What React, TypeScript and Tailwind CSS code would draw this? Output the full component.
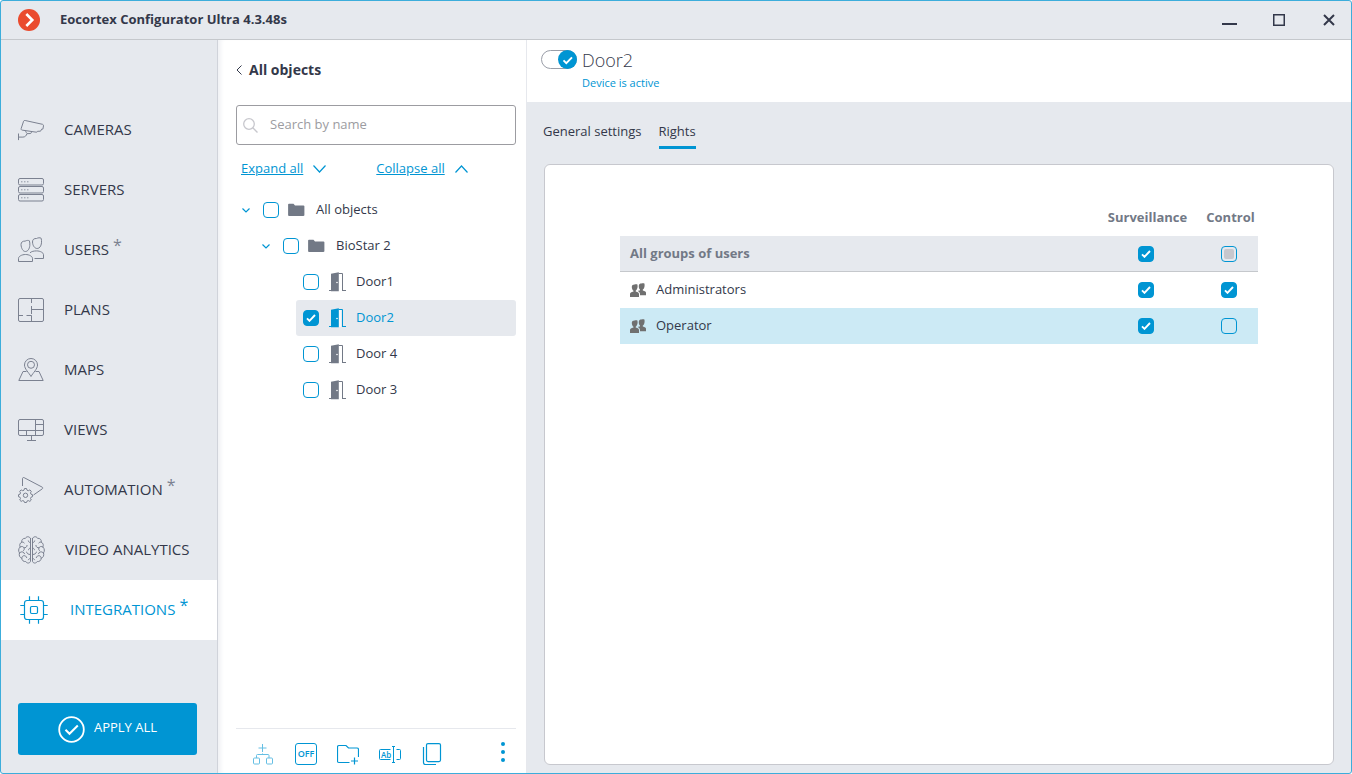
import React, { useState } from 'react';
import clsx from 'clsx';

type IconProps = { className?: string };

const CameraIcon = ({ className }: IconProps) => (
  <svg className={className} width="26" height="26" viewBox="0 0 26 26" fill="none" stroke="currentColor" strokeLinejoin="round">
    <path d="M5.6 4.200 3.200 11.400c-.3.900 0 1.500.9 1.700l14.200 2.100c.7.1 1-.2 1.200-.9l3-.1 1.200-2.100h1.200l.6-3.300c.1-.8-.3-1.200-1-1.500L7.200 3.500c-.8-.2-1.300 0-1.600.7Z" />
    <path d="M6.300 13.400c1.600.4 1.400 1.600 2.600 2.900M14 14.800c-.9.200-1 1.100-1.300 1.700l-3.800.2c-.5 2-1.900 3.400-4 3.400H.6M.5 16.500v6.600" />
  </svg>
);

const ServersIcon = ({ className }: IconProps) => (
  <svg className={className} width="26" height="24" viewBox="0 0 26 24" fill="none" stroke="currentColor">
    {[0, 8, 16].map((y) => (
      <g key={y}>
        <rect x=".5" y={y + 0.5} width="25" height="6.5" rx="1.5" />
        <path d={`M3.2 ${y + 3.8}h1.2M6.2 ${y + 3.8}h1.2M9.2 ${y + 3.8}h1.2`} />
      </g>
    ))}
  </svg>
);

const UsersIcon = ({ className }: IconProps) => (
  <svg className={className} width="26" height="26" viewBox="0 0 26 26" fill="none" stroke="currentColor" strokeLinejoin="round">
    <path d="M3 7.600C3 5 4.800 4 7.200 4.100c1.400-.8 3.200-.9 4.200-.3.400 1.500.6 3 .4 4.700-.3 3.300-2 6-4.400 6S3.300 11.500 3 7.600Z" />
    <path d="M.5 24.500v-3.200c0-1.800 3.200-3.800 7-3.800s7 2 7 3.800v3.200Z" />
    <path d="M14.500 5c0-2.600 1.600-3.700 4-3.500 1.500-.8 3.600-1 4.600-.3.400 1.300.6 3 .4 4.600-.3 3.300-1.900 5.700-4.300 5.700s-4.500-2.600-4.700-6.500Z" />
    <path d="M12 15.800c1.500-1.400 3.900-1.900 6.500-1.900 3.800 0 7 1.800 7 3.800v3.800h-9" />
  </svg>
);

const PlansIcon = ({ className }: IconProps) => (
  <svg className={className} width="26" height="24" viewBox="0 0 26 24" fill="none" stroke="currentColor">
    <rect x=".5" y=".5" width="25" height="23" rx="1.5" />
    <path d="M13.500 .5v4.500M13.500 8v8M13.500 11.500h12M.5 17.500h4.500M8.500 17.500h5v6" />
  </svg>
);

const MapsIcon = ({ className }: IconProps) => (
  <svg className={className} width="26" height="24" viewBox="0 0 26 24" fill="none" stroke="currentColor" strokeLinejoin="round">
    <path d="M13 18.500C11 14.800 6.500 11 6.500 7a6.500 6.500 0 0 1 13 0c0 4-4.500 7.800-6.500 11.500Z" />
    <circle cx="13" cy="6.800" r="3.500" />
    <path d="M8.500 13.500H5L.8 22.500h24.400L21 13.500h-3.500" />
  </svg>
);

const ViewsIcon = ({ className }: IconProps) => (
  <svg className={className} width="26" height="22" viewBox="0 0 26 22" fill="none" stroke="currentColor">
    <rect x=".5" y=".5" width="25" height="16" rx="1.5" />
    <path d="M17.500 .5v16M17.500 5.500h8M.5 11.500h25M8.500 11.500v5M13.500 16.500v5M9 21.500h9" />
  </svg>
);

const AutomationIcon = ({ className }: IconProps) => (
  <svg className={className} width="26" height="26" viewBox="0 0 26 26" fill="none" stroke="currentColor" strokeLinejoin="round">
    <path d="M4.500 9V1.800c0-1.200.7-1.600 1.700-1.100l17.900 9.400c.9.5.9 1.200.1 1.800L15.500 18" />
    <circle cx="7.500" cy="18.300" r="2.200" />
    <path d="m6.500 11.500 2 0 .5 1.700 1.300.5 1.600-.8 1.400 1.400-.8 1.600.5 1.300 1.500.5v2l-1.500.5-.5 1.300.8 1.500-1.400 1.400-1.600-.8-1.300.5-.5 1.400h-2l-.5-1.400-1.300-.5-1.600.8-1.400-1.400.8-1.500-.5-1.300-1.500-.5v-2l1.500-.5.5-1.300-.8-1.600 1.400-1.400 1.600.8 1.300-.5Z" />
  </svg>
);

const BrainIcon = ({ className }: IconProps) => (
  <svg className={className} width="27" height="28" viewBox="0 0 27 28" fill="none" stroke="currentColor" strokeLinecap="round">
    {['', 'translate(27 0) scale(-1 1)'].map((transform) => (
      <g key={transform} transform={transform}>
        <path d="M12.500 2.500C11.800 .3 8.500 0 7.500 2.300 5 2 3.200 4 3.800 6.200 1.600 7 1.300 9.500 2.200 11 .3 12.500.2 15.500 1.600 17c-1 2.300.2 4.700 2.200 5.200 0 2.300 2 3.700 3.900 3.300 1.300 2.200 4.200 2 4.800-.2V2.500Z" />
        <path d="M12.300 6.500c-1.200 0-1.900-.6-2-1.600M3.800 6.200c1-.4 2 0 2.400.8M2.200 11c1.300-1 3.300-.6 3.900.9.500 1.200 0 2.400-.8 2.900M6.100 11.900c1.600 0 2.900-.9 3-2.500M12.300 12c-1 .2-1.700.9-1.800 1.800M1.600 17c.7-1 2-1.400 3.200-1 .9.300 1.500.9 1.700 1.700M12.300 18.500c-2.200 0-3.500-1-3.700-2.400M3.800 22.200c0-1.300.8-2.300 2-2.500 1.400-.2 2.600.6 2.900 1.900M12.300 22.500c-.9 0-1.600.5-1.900 1.300" />
      </g>
    ))}
  </svg>
);

const ChipIcon = ({ className }: IconProps) => (
  <svg className={className} width="28" height="28" viewBox="0 0 28 28" fill="none" stroke="currentColor" strokeWidth="1.2">
    <rect x="4.500" y="4.500" width="19" height="19" rx="2.5" />
    <rect x="10.500" y="10.500" width="7" height="7" rx="1.2" />
    <path d="M9.500 4.500V.3M18.500 4.500V.3M9.500 23.500v4.200M18.500 23.500v4.200M4.500 9.500H.3M4.500 18.500H.3M23.500 9.500h4.200M23.500 18.500h4.200" />
  </svg>
);

const FolderIcon = ({ className }: IconProps) => (
  <svg className={className} width="17" height="14" viewBox="0 0 17 14" fill="currentColor">
    <path d="M1 .8h4.500L7 2.500h8.500c.5 0 .9.300.9.800v8.800c0 .5-.4.9-.9.900H1c-.5 0-.9-.4-.9-.9V1.600C.1 1.100.5.8 1 .8Z" />
  </svg>
);

const DoorIcon = ({ className }: IconProps) => (
  <svg className={className} width="17" height="20" viewBox="0 0 17 20" fill="none">
    <path d="M2 1.800 9.800 .3v19H2Z" fill="currentColor" />
    <path d="M9.500 1.500h4v17M0 18.500h2.500M13 18.500h4" stroke="currentColor" />
    <path d="M11 2v17" stroke="white" strokeWidth="1.4" />
    <circle cx="8" cy="10.500" r=".8" fill="white" />
  </svg>
);

const GroupIcon = ({ className }: IconProps) => (
  <svg className={className} width="16" height="14" viewBox="0 0 16 14" fill="currentColor">
    <path d="M1.800 4C1.700 2.300 3 1.500 4.500 1.500c1.100-.5 2.500-.5 2.900 0 .4 2 .2 3.300-.4 4.500-.3.900-.8 1.400-1.300 1.700v.8C8 8.900 9 9.800 9 11v3H0v-3c0-1.200 1.200-2.100 3.500-2.500v-.8C2.500 7.200 1.900 5.800 1.800 4Z" />
    <path d="M8.800 2.800C8.900 1.200 10 .6 11.300.6c1-.6 2.600-.6 3.100 0 .4 1.800.2 3.200-.3 4.300-.3.800-.8 1.400-1.300 1.700v.8c2.200.4 3.200 1.300 3.200 2.300v2.500h-6V11c0-1.500-1-2.600-2.300-3.100 0 0 1-.4 2.300-.5v-.8C9.100 5.900 8.700 4.600 8.800 2.800Z" />
  </svg>
);

const Chevron = ({ className, up, width, height }: IconProps & { up?: boolean; width: number; height: number }) => (
  <svg className={className} width={width} height={height} viewBox={`0 0 ${width} ${height}`} fill="none" stroke="currentColor" strokeWidth="1.2">
    <path d={up ? `M.5 ${height - 0.5} ${width / 2} 1l${width / 2 - 0.5} ${height - 1.5}` : `M.5 .5 ${width / 2} ${height - 1}l${width / 2 - 0.5} ${1.5 - height}`} />
  </svg>
);

type CheckboxProps = {
  label: string;
  checked: boolean;
  partial?: boolean;
  onChange: () => void;
};

const Checkbox = ({ label, checked, partial, onChange }: CheckboxProps) => (
  <span className="inline-grid size-4 shrink-0 place-items-center align-top">
    <input
      type="checkbox"
      aria-label={label}
      checked={checked}
      onChange={onChange}
      className="col-start-1 row-start-1 size-4 appearance-none rounded-[4px] border border-[#0095d3] checked:bg-[#0095d3]"
    />
    {checked && (
      <svg className="pointer-events-none col-start-1 row-start-1" width="10" height="8" viewBox="0 0 10 8" fill="none" stroke="white" strokeWidth="1.9">
        <path d="m1 4.300 2.500 2.500L9 1" />
      </svg>
    )}
    {partial && !checked && <span className="pointer-events-none col-start-1 row-start-1 size-[10px] rounded-xs bg-[#c7c7cd]" />}
  </span>
);

const NAV = [
  { label: 'CAMERAS', Icon: CameraIcon, changed: false },
  { label: 'SERVERS', Icon: ServersIcon, changed: false },
  { label: 'USERS', Icon: UsersIcon, changed: true },
  { label: 'PLANS', Icon: PlansIcon, changed: false },
  { label: 'MAPS', Icon: MapsIcon, changed: false },
  { label: 'VIEWS', Icon: ViewsIcon, changed: false },
  { label: 'AUTOMATION', Icon: AutomationIcon, changed: true },
  { label: 'VIDEO ANALYTICS', Icon: BrainIcon, changed: false },
  { label: 'INTEGRATIONS', Icon: ChipIcon, changed: true },
];

const DOORS = ['Door1', 'Door2', 'Door 4', 'Door 3'];

const TitleBar = () => (
  <header className="flex h-[39px] shrink-0 items-center border-b border-[#c5c8cc] pr-[14px] pb-px pl-[17px]">
    <svg width="22" height="22" viewBox="0 0 22 22" fill="none">
      <circle cx="11" cy="11" r="11" fill="#ea4b2e" />
      <path d="m8.300 5 6 6-6 6" stroke="white" strokeWidth="2.6" />
    </svg>
    <h1 className="ml-5 pb-[2px] text-[13px] leading-5 font-bold">Eocortex Configurator Ultra 4.3.48s</h1>
    <div className="ml-auto flex gap-[34px]">
      <button type="button" aria-label="Minimize" className="flex size-4 items-center justify-center">
        <svg width="16" height="16" stroke="currentColor" strokeWidth="2"><path d="M1 12h15" /></svg>
      </button>
      <button type="button" aria-label="Maximize" className="flex size-4 items-center justify-center">
        <svg width="16" height="16" fill="none" stroke="currentColor" strokeWidth="1.5"><rect x="2.750" y="2.750" width="10.500" height="10.500" /></svg>
      </button>
      <button type="button" aria-label="Close" className="flex size-4 items-center justify-center">
        <svg width="16" height="16" stroke="currentColor" strokeWidth="2"><path d="m3 3 10 10M13 3 3 13" /></svg>
      </button>
    </div>
  </header>
);

const Sidebar = () => {
  const [active, setActive] = useState('INTEGRATIONS');

  return (
    <aside className="flex w-[217px] shrink-0 flex-col border-r border-[#d0d3da]">
      <nav className="mt-[60px]">
        {NAV.map(({ label, Icon, changed }) => {
          const isActive = label === active;
          return (
            <button
              key={label}
              type="button"
              onClick={() => setActive(label)}
              className={clsx(
                'flex h-[60px] w-full items-center text-[15px]',
                isActive ? 'gap-[22px] bg-white pl-[19px] text-[#0095d3]' : 'gap-5 pl-[17px]'
              )}
            >
              <Icon className={clsx('shrink-0', !isActive && 'text-[#7b8190]')} />
              <span className="flex gap-1 pb-[2px] leading-5 whitespace-nowrap">
                {label}
                {changed && <span className={clsx('text-base leading-3', !isActive && 'text-[#7b8190]')}>*</span>}
              </span>
            </button>
          );
        })}
      </nav>
      <button type="button" className="mt-auto mr-5 mb-[18px] ml-[17px] flex h-[52px] items-center justify-center gap-[9px] rounded-[3px] bg-[#0095d3] text-[13px] text-white">
        <svg width="27" height="27" viewBox="0 0 27 27" fill="none" stroke="white">
          <circle cx="13.500" cy="13.500" r="12.300" strokeWidth="1.8" />
          <path d="m7.500 13.800 4 4 8.300-8.300" strokeWidth="2" />
        </svg>
        <span className="pb-[2px]">APPLY ALL</span>
      </button>
    </aside>
  );
};

const ObjectsPanel = () => {
  const [checked, setChecked] = useState<string[]>(['Door2']);
  const [query, setQuery] = useState('');

  const toggle = (name: string) =>
    setChecked((prev) => (prev.includes(name) ? prev.filter((n) => n !== name) : [...prev, name]));

  return (
    <section className="flex w-[309px] shrink-0 flex-col border-r border-[#e6e8ed] bg-white pr-[10px] pl-[18px] shadow-[inset_5px_0_4px_-2px_#f1f2f5]">
      <button type="button" className="mt-5 flex h-5 items-center gap-[6px] text-sm font-bold">
        <svg width="7" height="10" viewBox="0 0 7 10" fill="none" stroke="currentColor"><path d="M5.500 .5 1 5l4.500 4.500" /></svg>
        All objects
      </button>

      <label className="mt-[25px] flex h-10 items-center gap-3 rounded-[3px] border border-[#9c9ca1] px-[6px]">
        <svg className="shrink-0 text-[#c7c7cd]" width="15" height="15" viewBox="0 0 15 15" fill="none" stroke="currentColor" strokeWidth="1.3">
          <circle cx="6" cy="6" r="5.300" />
          <path d="m9.800 9.800 4.700 4.700" />
        </svg>
        <input
          type="text"
          value={query}
          onChange={(e) => setQuery(e.target.value)}
          aria-label="Search by name"
          placeholder="Search by name"
          className="min-w-0 flex-1 text-[13px] outline-none placeholder:text-[#9c9ca1]"
        />
      </label>

      <div className="mt-[14px] flex h-5 items-center pl-[5px] text-[13px] text-[#0095d3]">
        <button type="button" className="flex items-center gap-[10px]">
          <span className="underline">Expand all</span>
          <Chevron width={13} height={8} />
        </button>
        <button type="button" className="ml-[50px] flex items-center gap-[10px]">
          <span className="underline">Collapse all</span>
          <Chevron width={13} height={8} up />
        </button>
      </div>

      <ul className="mt-[13px] text-[13px]">
        <li>
          <div className="flex h-9 items-center pl-[6px]">
            <Chevron className="mr-[13px] text-[#0095d3]" width={8} height={5} />
            <Checkbox label="All objects" checked={checked.includes('All objects')} onChange={() => toggle('All objects')} />
            <FolderIcon className="mr-[11px] ml-[9px] text-[#727986]" />
            All objects
          </div>
          <ul className="ml-5">
            <li>
              <div className="flex h-9 items-center pl-[6px]">
                <Chevron className="mr-[13px] text-[#0095d3]" width={8} height={5} />
                <Checkbox label="BioStar 2" checked={checked.includes('BioStar 2')} onChange={() => toggle('BioStar 2')} />
                <FolderIcon className="mr-[11px] ml-[9px] text-[#727986]" />
                BioStar 2
              </div>
              <ul className="ml-10">
                {DOORS.map((door) => (
                  <li
                    key={door}
                    className={clsx('flex h-9 items-center rounded-[3px] pl-[7px]', door === 'Door2' && 'bg-[#e6e9ee] text-[#0095d3]')}
                  >
                    <Checkbox label={door} checked={checked.includes(door)} onChange={() => toggle(door)} />
                    <DoorIcon className={clsx('mr-[10px] ml-[10px]', door !== 'Door2' && 'text-[#727986]')} />
                    {door}
                  </li>
                ))}
              </ul>
            </li>
          </ul>
        </li>
      </ul>

      <div className="mt-auto flex h-[45px] items-center gap-5 border-t border-[#e6e8ed] pt-[6px] pl-[17px] text-[#0095d3]">
        <button type="button" aria-label="Add object" className="flex size-[22px] items-center opacity-60">
          <svg width="20" height="22" viewBox="0 0 20 22" fill="none" stroke="currentColor">
            <path d="M9.500 1v8M5.500 5h8M9.500 12v-1.500M3.500 15v-2.500c0-.6.3-1 1-1h10.500c.7 0 1 .4 1 1V15" />
            <rect x=".5" y="15" width="6" height="6" rx="1" />
            <rect x="13.500" y="15" width="6" height="6" rx="1" />
          </svg>
        </button>
        <button type="button" className="flex size-[22px] items-center justify-center rounded-[3px] border border-[#0095d3] text-[9px] font-semibold">
          OFF
        </button>
        <button type="button" aria-label="Add folder" className="flex size-[22px] items-center">
          <svg width="22" height="22" viewBox="0 0 22 22" fill="none" stroke="currentColor" strokeWidth="1.2">
            <path d="M12.500 19.500H2c-1 0-1.500-.5-1.500-1.500V4c0-1 .5-1.500 1.500-1.500h7l2.500 2.500H20c1 0 1.500.5 1.500 1.500V14M17.500 14.500v7M14 18h7" />
          </svg>
        </button>
        <button type="button" aria-label="Rename" className="flex size-[22px] items-center">
          <svg width="22" height="22" viewBox="0 0 22 22" fill="none" stroke="currentColor">
            <path d="M11.500 6.500h-10c-.7 0-1 .3-1 1v8c0 .7.3 1 1 1h10M17.500 6.500h3c.7 0 1 .3 1 1v8c0 .7-.3 1-1 1h-3M14.500 3.500v16M13 3.500h3M13 19.500h3" />
            <text x="2" y="15" fontSize="8" fontWeight="600" fill="currentColor" stroke="none">Ab</text>
          </svg>
        </button>
        <button type="button" aria-label="Copy" className="flex size-[22px] items-center">
          <svg width="22" height="22" viewBox="0 0 22 22" fill="none" stroke="currentColor" strokeWidth="1.2">
            <rect x="5.500" y=".6" width="14" height="18" rx="1.5" />
            <path d="M2.500 4v15.500c0 1.300.6 2 1.900 2H15" />
          </svg>
        </button>
        <button type="button" aria-label="More actions" className="mr-[11px] ml-auto">
          <svg className="mb-1 block" width="4" height="20" viewBox="0 0 4 20" fill="currentColor">
            <circle cx="2" cy="2" r="2" />
            <circle cx="2" cy="10" r="2" />
            <circle cx="2" cy="18" r="2" />
          </svg>
        </button>
      </div>
    </section>
  );
};

const RightsTable = () => {
  const [rights, setRights] = useState([
    { name: 'Administrators', surveillance: true, control: true },
    { name: 'Operator', surveillance: true, control: false },
  ]);

  const flip = (index: number, key: 'surveillance' | 'control') =>
    setRights((prev) => prev.map((r, i) => (i === index ? { ...r, [key]: !r[key] } : r)));

  const setAll = (key: 'surveillance' | 'control') =>
    setRights((prev) => {
      const next = !prev.every((r) => r[key]);
      return prev.map((r) => ({ ...r, [key]: next }));
    });

  return (
    <table className="w-full table-fixed border-separate border-spacing-0 text-[13px]">
      <thead>
        <tr className="h-9 text-[#727986]">
          <td />
          <th scope="col" className="w-[108px] p-0 pl-[3px] text-center font-bold">Surveillance</th>
          <th scope="col" className="w-[58px] p-0 pl-[3px] text-center font-bold">Control</th>
        </tr>
      </thead>
      <tbody>
        <tr className="h-9 bg-[#e6e9ee] text-[#727986]">
          <th scope="row" className="border-b border-[#c5c8cc] p-0 pl-[10px] text-left font-bold">All groups of users</th>
          {(['surveillance', 'control'] as const).map((key) => (
            <td key={key} className="border-b border-[#c5c8cc] p-0 text-center leading-4">
              <Checkbox
                label={`All groups of users: ${key}`}
                checked={rights.every((r) => r[key])}
                partial={rights.some((r) => r[key])}
                onChange={() => setAll(key)}
              />
            </td>
          ))}
        </tr>
        {rights.map((row, i) => (
          <tr key={row.name} className={clsx('h-9', row.name === 'Operator' && 'bg-[#cceaf5]')}>
            <th scope="row" className="p-0 pl-[10px] text-left font-normal">
              <span className="flex items-center gap-[10px]">
                <GroupIcon className="text-[#707070]" />
                {row.name}
              </span>
            </th>
            {(['surveillance', 'control'] as const).map((key) => (
              <td key={key} className="p-0 text-center leading-4">
                <Checkbox label={`${row.name}: ${key}`} checked={row[key]} onChange={() => flip(i, key)} />
              </td>
            ))}
          </tr>
        ))}
      </tbody>
    </table>
  );
};

const DevicePanel = () => {
  const [enabled, setEnabled] = useState(true);

  return (
    <main className="flex min-w-0 flex-1 flex-col">
      <div className="flex h-[62px] shrink-0 gap-[5px] bg-white pt-[10px] pl-[14px]">
        <button
          type="button"
          role="switch"
          aria-checked={enabled}
          aria-label="Device active"
          onClick={() => setEnabled(!enabled)}
          className={clsx('flex h-[19px] w-9 items-center rounded-full border border-[#9a9ea8]', enabled && 'justify-end')}
        >
          <svg className="-mr-px shrink-0" width="19" height="19" viewBox="0 0 19 19" fill="none">
            <circle cx="9.500" cy="9.500" r="9.500" fill={enabled ? '#0095d3' : '#9a9ea8'} />
            <path d="m5.500 10.300 2.800 2.800 5.700-5.800" stroke="white" strokeWidth="1.9" />
          </svg>
        </button>
        <div>
          <h2 className="text-[18px] leading-5 font-light">Door2</h2>
          <p className="mt-1 text-[11px] leading-[18px] text-[#0095d3]">Device is active</p>
        </div>
      </div>

      <div className="mt-[18px] flex h-[29px] shrink-0 gap-[17px] pl-4 text-[13px] leading-[22px]">
        <button type="button" className="border-b-[3px] border-transparent pb-1">General settings</button>
        <button type="button" className="border-b-[3px] border-[#0095d3] pb-1">Rights</button>
      </div>

      <div className="mx-[17px] mt-[15px] mb-2 flex-1 rounded-md border border-[#c7c8ce] bg-white px-[75px] pt-[35px]">
        <RightsTable />
      </div>
    </main>
  );
};

export default function App() {
  return (
    <div className="flex h-screen flex-col overflow-hidden rounded-[3px] border border-[#3caddb] bg-[#e6e9ee] font-['Open_Sans','Noto_Sans',sans-serif] text-[#33384a]">
      <TitleBar />
      <div className="flex min-h-0 flex-1">
        <Sidebar />
        <ObjectsPanel />
        <DevicePanel />
      </div>
    </div>
  );
}
